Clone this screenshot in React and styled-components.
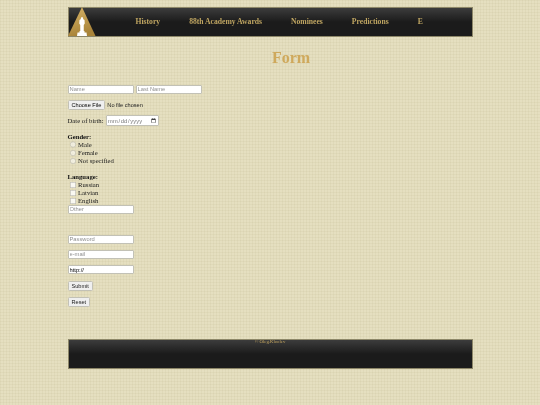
import React from "react";
import styled, { createGlobalStyle } from "styled-components";

const GlobalStyle = createGlobalStyle`
  html, body {
    margin: 0;
    padding: 0;
  }
  body {
    background-color: #e5dfc0;
    background-image:
      repeating-linear-gradient(0deg, rgba(150, 140, 90, 0.07) 0 1px, transparent 1px 3px),
      repeating-linear-gradient(90deg, rgba(150, 140, 90, 0.07) 0 1px, transparent 1px 3px);
    font-family: "Liberation Serif", "Times New Roman", serif;
    overflow: hidden;
  }
`;

const Page = styled.div`
  zoom: 0.5;
  width: 810px;
  height: 810px;
  margin: 0 auto;
  padding-top: 14px;
  color: #1c1c1c;
  font-size: 13.4px;
  will-change: opacity;
`;

const darkBar = `
  background: linear-gradient(#3c3c3c 0, #1b1b1b 50%, #1b1b1b 100%);
  border: 1px solid #8d8768;
  box-sizing: border-box;
`;

const Header = styled.header`
  ${darkBar}
  height: 59px;
  display: flex;
  align-items: center;
`;

const Logo = styled.svg`
  width: 56px;
  height: 58px;
  flex: none;
  align-self: flex-end;
  margin-left: -1px;
`;

const Nav = styled.nav`
  display: flex;
  gap: 58px;
  margin-left: 79px;
`;

const NavLink = styled.a`
  color: #c0a662;
  font-weight: bold;
  font-size: 15.3px;
`;

const Title = styled.h1`
  margin: 24px 0 0 0;
  padding-left: 84px;
  text-align: center;
  color: #cfa95c;
  font-size: 32px;
  line-height: 36px;
  font-weight: bold;
`;

const Form = styled.form`
  display: flex;
  flex-direction: column;
  margin-top: 36px;
`;

const Row = styled.div`
  display: flex;
  align-items: center;
  gap: ${(p) => p.$gap || 0}px;
  margin-top: ${(p) => p.$top || 0}px;
  height: ${(p) => (p.$height ? `${p.$height}px` : "auto")};
`;

const TextInput = styled.input`
  width: 132px;
  height: 18px;
  box-sizing: border-box;
  padding: 1px 2px;
  font-family: "Liberation Sans", Arial, sans-serif;
  font-size: 11.5px;
  background: #fff;
  border: 2px solid #c2c1b6;
  border-radius: 2px;
  outline: none;
  &::placeholder {
    color: #8f8f8f;
  }
`;

const DateInput = styled.input`
  width: 106px;
  height: 22px;
  margin-left: 5px;
  box-sizing: border-box;
  background: #fff;
  border: 2px solid #c2c1b6;
  border-radius: 2px;
  font-family: "Liberation Sans", Arial, sans-serif;
  font-size: 11.5px;
  letter-spacing: 0.3px;
  color: #777;
`;

const FileInput = styled.input`
  font-family: "Liberation Sans", Arial, sans-serif;
  font-size: 11.2px;
  color: #222;
  &::file-selector-button {
    height: 20px;
    padding: 1px 6px;
    margin-right: 4px;
    font: inherit;
    background: #efefef;
    border: 2px solid #c2c1b6;
    border-radius: 3px;
  }
`;

const Heading = styled.div`
  font-weight: bold;
  line-height: 18px;
  color: #111;
  margin-top: ${(p) => p.$top || 0}px;
`;

const Option = styled.label`
  display: flex;
  align-items: center;
  height: ${(p) => p.$height || 16.5}px;
  line-height: 16px;
  input {
    margin: 0 4px 0 4px;
  }
  input[type="radio"] {
    opacity: 0.5;
  }
  input[type="checkbox"] {
    opacity: 0.8;
  }
`;

const Button = styled.input`
  font-family: "Liberation Sans", Arial, sans-serif;
  font-size: 11.2px;
  color: #222;
  height: 20px;
  padding: 1px 6px;
  box-sizing: border-box;
  align-self: flex-start;
  background: #efefef;
  border: 2px solid #c2c1b6;
  border-radius: 3px;
  margin-top: ${(p) => p.$top || 0}px;
`;

const Footer = styled.footer`
  ${darkBar}
  height: 60px;
  margin-top: 64px;
  text-align: center;
  color: #c7a860;
  font-size: 9.5px;
  line-height: 9px;
`;

export default function App() {
  return (
    <>
      <GlobalStyle />
      <Page>
        <Header>
          <Logo viewBox="0 0 56 58">
            <defs>
              <linearGradient id="gold" x1="0" y1="0" x2="0.3" y2="1">
                <stop offset="0" stopColor="#d8b468" />
                <stop offset="1" stopColor="#a98439" />
              </linearGradient>
            </defs>
            <path d="M28 0 L55 58 L0 58 Z" fill="url(#gold)" />
            <path
              d="M26 24 a2.400 2.400 0 1 1 4 0 L33 26 L33.500 33 L31.500 36 L31.500 48 L33 48 L33 51 L37 51 L38 58 L18 58 L19 51 L23 51 L23 48 L24.500 48 L24.500 36 L22.500 33 L23 26 Z"
              fill="#fff"
            />
          </Logo>
          <Nav>
            <NavLink>History</NavLink>
            <NavLink>88th Academy Awards</NavLink>
            <NavLink>Nominees</NavLink>
            <NavLink>Predictions</NavLink>
            <NavLink>E</NavLink>
          </Nav>
        </Header>

        <Title>Form</Title>

        <Form onSubmit={(e) => e.preventDefault()}>
          <Row $gap={4}>
            <TextInput placeholder="Name" />
            <TextInput placeholder="Last Name" />
          </Row>
          <Row $top={13}>
            <FileInput type="file" />
          </Row>
          <Row $top={9} $height={24}>
            Date of birth:
            <DateInput type="date" />
          </Row>

          <Heading $top={10}>Gender:</Heading>
          <Option>
            <input type="radio" name="gender" /> Male
          </Option>
          <Option>
            <input type="radio" name="gender" /> Female
          </Option>
          <Option>
            <input type="radio" name="gender" /> Not specified
          </Option>

          <Heading $top={13}>Language:</Heading>
          <Option>
            <input type="checkbox" /> Russian
          </Option>
          <Option>
            <input type="checkbox" /> Latvian
          </Option>
          <Option $height={15}>
            <input type="checkbox" /> English
          </Option>
          <TextInput placeholder="Other" />

          <Row $top={42}>
            <TextInput type="password" placeholder="Password" />
          </Row>
          <Row $top={12}>
            <TextInput type="email" placeholder="e-mail" />
          </Row>
          <Row $top={13}>
            <TextInput type="url" defaultValue="http://" />
          </Row>
          <Button type="submit" value="Submit" $top={13} />
          <Button type="reset" value="Reset" $top={12} />
        </Form>

        <Footer>© Oleg.Kloolev</Footer>
      </Page>
    </>
  );
}
